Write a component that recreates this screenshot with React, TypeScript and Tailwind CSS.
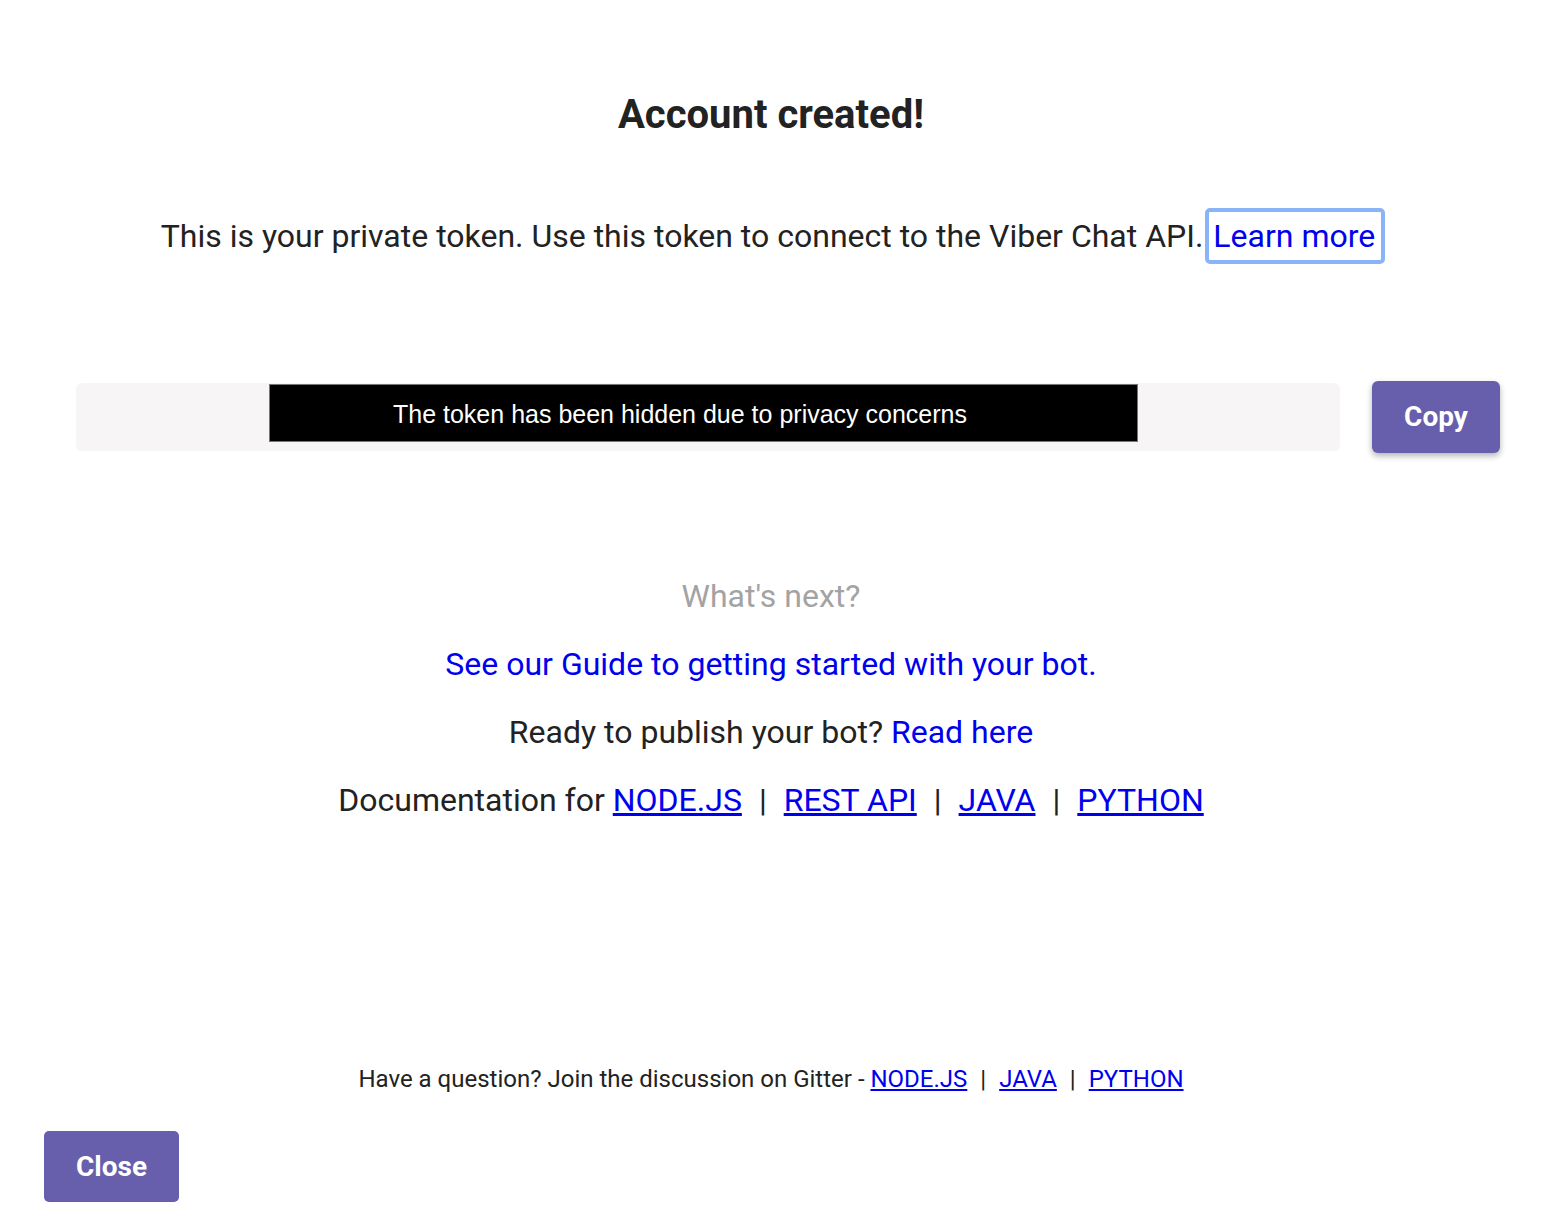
const Pipe = ({ className }: { className: string }) => (
  <span className={className}>|</span>
);

const App = () => {
  return (
    <main
      className="min-h-screen bg-white text-[#222222] flex flex-col"
      style={{ fontFamily: "Roboto, 'Noto Sans', sans-serif" }}
    >
      <h1 className="text-center text-[40px] leading-[48px] font-bold pt-[91px]">
        Account created!
      </h1>

      <div className="flex justify-center items-center text-[32px] leading-[42px] mt-[69px] h-[56px] pl-[4px]">
        <span className="mr-[2px]">
          This is your private token. Use this token to connect to the Viber Chat API.
        </span>
        <a
          href="#"
          className="text-[#0000ee] border-[4px] border-[#8ab4f8] rounded-[5px] pl-[4px] pr-[6px] leading-[44px] h-[56px] flex items-center"
        >
          Learn more
        </a>
      </div>

      {/* token row */}
      <div className="flex items-center gap-[32px] pl-[76px] pr-[42px] mt-[117px]">
        <div className="flex-1 h-[68px] bg-[#f7f5f6] rounded-[6px] pl-[193px] pt-[1px]">
          <div
            className="w-[869px] h-[58px] bg-black border border-[#777] flex items-center pl-[123px] pt-[3px] text-white text-[25px]"
            style={{ fontFamily: "'Liberation Sans', Arial, sans-serif" }}
          >
            The token has been hidden due to privacy concerns
          </div>
        </div>
        <button className="w-[128px] h-[72px] bg-[#675eac] rounded-[6px] text-white text-[28px] font-bold shadow-[0_3px_6px_rgba(0,0,0,0.3)]">
          Copy
        </button>
      </div>

      <div className="flex flex-col items-center text-[32px] leading-[40px] mt-[123px] gap-[28px]">
        <p className="text-[#a3a3a3]">What's next?</p>
        <a href="#" className="text-[#0000ee]">
          See our Guide to getting started with your bot.
        </a>
        <p>
          Ready to publish your bot?{" "}
          <a href="#" className="text-[#0000ee]">
            Read here
          </a>
        </p>
        <p>
          Documentation for{" "}
          <a href="#" className="text-[#0000ee] underline">NODE.JS</a>
          <Pipe className="mx-[17px]" />
          <a href="#" className="text-[#0000ee] underline">REST API</a>
          <Pipe className="mx-[17px]" />
          <a href="#" className="text-[#0000ee] underline">JAVA</a>
          <Pipe className="mx-[17px]" />
          <a href="#" className="text-[#0000ee] underline">PYTHON</a>
        </p>
      </div>

      <p className="text-center text-[24px] leading-[30px] mt-[244px]">
        Have a question? Join the discussion on Gitter -{" "}
        <a href="#" className="text-[#0000ee] underline">NODE.JS</a>
        <Pipe className="mx-[13px]" />
        <a href="#" className="text-[#0000ee] underline">JAVA</a>
        <Pipe className="mx-[13px]" />
        <a href="#" className="text-[#0000ee] underline">PYTHON</a>
      </p>

      <div className="pl-[44px] mt-[37px] pb-[28px]">
        <button className="w-[135px] h-[71px] bg-[#675eac] rounded-[5px] text-white text-[28px] font-bold">
          Close
        </button>
      </div>
    </main>
  );
};

export default App;
